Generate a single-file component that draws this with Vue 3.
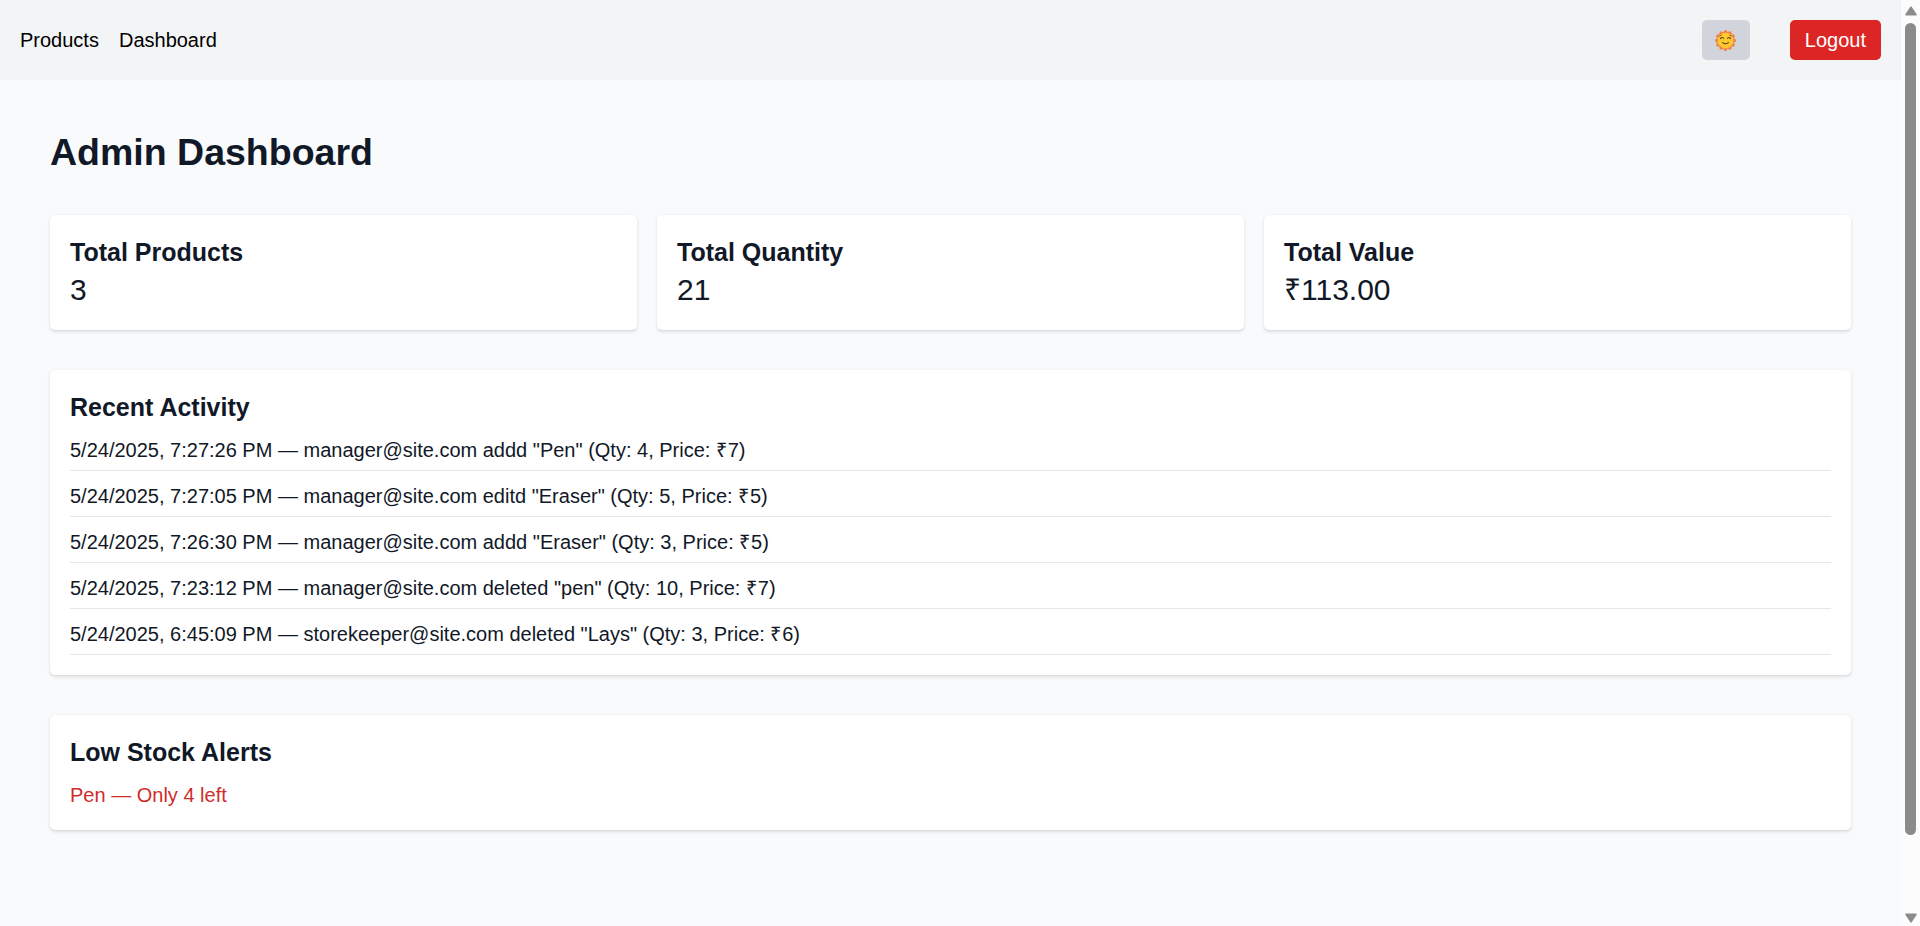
<script setup>
const stats = [
  { title: 'Total Products', value: '3' },
  { title: 'Total Quantity', value: '21' },
  { title: 'Total Value', value: '₹113.00' },
]

const activity = [
  { time: '5/24/2025, 7:27:26 PM', user: 'manager@site.com', action: 'addd', item: 'Pen', qty: 4, price: 7 },
  { time: '5/24/2025, 7:27:05 PM', user: 'manager@site.com', action: 'editd', item: 'Eraser', qty: 5, price: 5 },
  { time: '5/24/2025, 7:26:30 PM', user: 'manager@site.com', action: 'addd', item: 'Eraser', qty: 3, price: 5 },
  { time: '5/24/2025, 7:23:12 PM', user: 'manager@site.com', action: 'deleted', item: 'pen', qty: 10, price: 7 },
  { time: '5/24/2025, 6:45:09 PM', user: 'storekeeper@site.com', action: 'deleted', item: 'Lays', qty: 3, price: 6 },
]

const lowStock = [{ name: 'Pen', left: 4 }]

// Twelve scallops around the sun's face
const rays = Array.from({ length: 12 }, (_, i) => {
  const a = (i * Math.PI) / 6
  return { x: 10 + 8.1 * Math.cos(a), y: 10 + 8.1 * Math.sin(a) }
})
</script>

<template>
  <div class="window">
    <div class="page">
      <nav class="nav">
        <div class="links">
          <a class="link">Products</a>
          <a class="link">Dashboard</a>
        </div>
        <div class="actions">
          <button class="theme" aria-label="Theme">
            <svg class="sun" viewBox="0 0 20 20">
              <circle v-for="(r, i) in rays" :key="i" :cx="r.x" :cy="r.y" r="1.8" fill="#f5803e" />
              <circle cx="10" cy="10" r="8" fill="#f5803e" />
              <circle cx="10" cy="10" r="7.5" fill="#fdc92f" />
              <g fill="none" stroke="#5a3a1c" stroke-width="1" stroke-linecap="round" stroke-linejoin="round">
                <path d="M5.2 8.2 Q6.6 6.4 8.2 7.9" />
                <path d="M11.8 7.9 Q13.4 6.4 14.8 8.2" />
                <path d="M7.2 12 Q10 14.2 12.8 12" />
                <path d="M4.6 5.8 L6 4.9 M15.4 5.8 L14 4.9" stroke-width=".7" />
              </g>
            </svg>
          </button>
          <button class="logout">Logout</button>
        </div>
      </nav>

      <main class="main">
        <h1 class="heading">Admin Dashboard</h1>

        <div class="stats">
          <div v-for="s in stats" :key="s.title" class="card">
            <h2 class="title">{{ s.title }}</h2>
            <p class="value">{{ s.value }}</p>
          </div>
        </div>

        <section class="card section">
          <h2 class="title spaced">Recent Activity</h2>
          <ul class="list">
            <li v-for="a in activity" :key="a.time" class="entry">{{ a.time }} — {{ a.user }} {{ a.action }} "{{ a.item }}" (Qty: {{ a.qty }}, Price: <span class="rupee">₹</span>{{ a.price }})</li>
          </ul>
        </section>

        <section class="card section">
          <h2 class="title spaced">Low Stock Alerts</h2>
          <ul class="list">
            <li v-for="p in lowStock" :key="p.name" class="alert">{{ p.name }} — Only {{ p.left }} left</li>
          </ul>
        </section>
      </main>
    </div>

    <div class="scrollbar">
      <svg class="arrow" viewBox="0 0 12 10"><path d="M6 1.2 L11 8.6 H1 Z" /></svg>
      <div class="thumb"></div>
      <svg class="arrow down" viewBox="0 0 12 10"><path d="M1 1.4 H11 L6 8.8 Z" /></svg>
    </div>
  </div>
</template>

<style>
body {
  margin: 0;
  overflow: hidden;
}
</style>

<style scoped>
* {
  box-sizing: border-box;
}

.window {
  display: flex;
  height: 100vh;
  background: #f9fafb;
  color: #111827;
  font-family: "Liberation Sans", Arial, sans-serif;
  font-size: 20px;
  line-height: 30px;
}

.page {
  flex: 1;
  min-width: 0;
}

.nav {
  display: flex;
  align-items: center;
  justify-content: space-between;
  height: 80px;
  padding: 20px;
  background: #f3f4f6;
  color: #000;
}

.links {
  display: flex;
  gap: 20px;
}

.actions {
  display: flex;
  gap: 40px;
}

button {
  border: 0;
  border-radius: 5px;
  font: inherit;
}

.theme {
  display: flex;
  align-items: center;
  justify-content: center;
  width: 48px;
  height: 40px;
  padding: 0;
  background: #d1d5db;
}

.sun {
  width: 21px;
  height: 21px;
}

.logout {
  height: 40px;
  padding: 5px 15px;
  background: #dc2626;
  color: #fff;
}

.main {
  padding: 50px;
}

.heading {
  margin: 0 0 40px;
  font-size: 37.5px;
  line-height: 45px;
  font-weight: 700;
}

.stats {
  display: grid;
  grid-template-columns: repeat(3, 1fr);
  gap: 20px;
}

.card {
  padding: 20px;
  border-radius: 5px;
  background: #fff;
  box-shadow: 0 1.25px 3.75px rgba(0, 0, 0, 0.1), 0 1.25px 2.5px -1.25px rgba(0, 0, 0, 0.1);
}

.section {
  margin-top: 40px;
}

.title {
  margin: 0;
  font-size: 25px;
  line-height: 35px;
  font-weight: 600;
}

.spaced {
  margin-bottom: 10px;
}

.value {
  margin: 0;
  font-size: 30px;
  line-height: 40px;
}

.list {
  display: flex;
  flex-direction: column;
  gap: 10px;
  margin: 0;
  padding: 0;
  list-style: none;
}

.entry {
  padding-bottom: 5px;
  border-bottom: 1px solid #e5e7eb;
}

.rupee {
  letter-spacing: 0.8px;
}

.alert {
  color: #d02c2c;
}

.scrollbar {
  display: flex;
  flex-direction: column;
  align-items: center;
  width: 19px;
  padding: 6px 0 3px;
  background: #fcfcfc;
}

.arrow {
  width: 12px;
  height: 10px;
  fill: #8b8b8b;
  stroke: #8b8b8b;
  stroke-width: 1.6;
  stroke-linejoin: round;
}

.down {
  margin-top: auto;
}

.thumb {
  width: 11px;
  height: 812px;
  margin-top: 7px;
  border-radius: 6px;
  background: #8b8b8b;
}
</style>
